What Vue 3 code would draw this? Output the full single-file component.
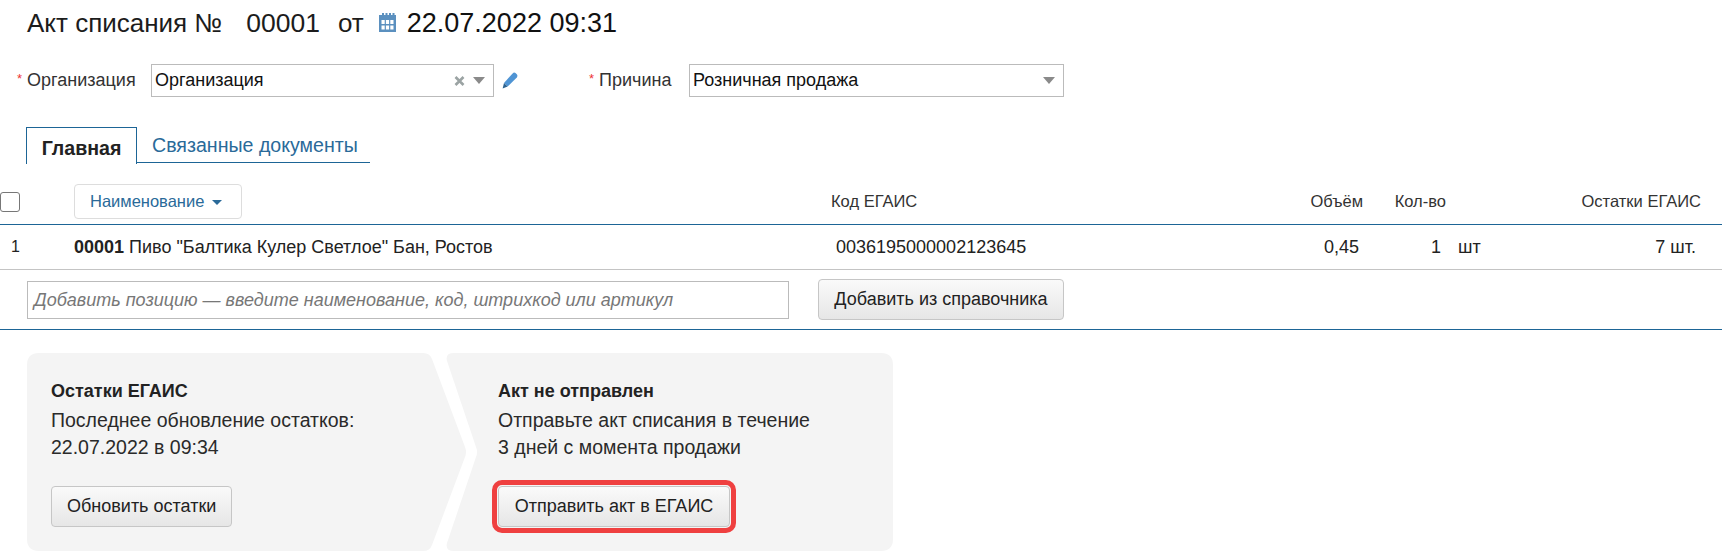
<template>
  <div class="page">
    <h1 class="title">
      <span>Акт списания №</span>
      <span class="num">00001</span>
      <span class="from">от</span>
      <svg class="cal" viewBox="0 0 17 19" width="17" height="19">
        <path fill="#5b90bf" d="M2 2h1V0h2v2h1.5V0h2v2H10V0h2v2h1.5V0h2v2H17v17H0V2z" />
        <path fill="#fff" d="M2.5 7h3.2v4H2.5zM6.9 7h3.2v4H6.9zM11.3 7h3.2v4h-3.2zM2.5 12.5h3.2v4H2.5zM6.9 12.5h3.2v4H6.9zM11.3 12.5h3.2v4h-3.2z" />
      </svg>
      <span class="date">22.07.2022 09:31</span>
    </h1>

    <div class="form-row">
      <label class="lbl org-lbl"><i>*</i>Организация</label>
      <div class="select org">
        <span class="val">Организация</span>
        <svg class="x" viewBox="0 0 11 10" width="11" height="10">
          <path d="M1.5 1l8 8M9.5 1l-8 8" stroke="#9ba3a3" stroke-width="2.6" fill="none" />
        </svg>
        <span class="caret"></span>
      </div>
      <svg class="pencil" viewBox="0 0 16 17" width="16" height="17">
        <path fill="#4f94d4" d="M10.6 1.4Q12 0 13.5 1L15 2.6Q16 4 14.8 5.4L5.6 14.6 2 11z" />
        <path fill="#2d628f" d="M2 11L5.6 14.6 .6 16.4z" />
      </svg>
      <label class="lbl why-lbl"><i>*</i>Причина</label>
      <div class="select why">
        <span class="val">Розничная продажа</span>
        <span class="caret"></span>
      </div>
    </div>

    <div class="tabs">
      <div class="tab active">Главная</div>
      <div class="tab">Связанные документы</div>
    </div>

    <div class="grid head">
      <div class="check"></div>
      <div><span class="sort">Наименование<span class="sort-caret"></span></span></div>
      <div>Код ЕГАИС</div>
      <div class="r">Объём</div>
      <div class="r">Кол-во</div>
      <div></div>
      <div class="r">Остатки ЕГАИС</div>
    </div>

    <div class="grid item">
      <div class="idx">1</div>
      <div><b>00001</b> Пиво "Балтика Кулер Светлое" Бан, Ростов</div>
      <div class="code">0036195000002123645</div>
      <div class="r vol">0,45</div>
      <div class="r qty">1</div>
      <div class="unit">шт</div>
      <div class="r rest">7 шт.</div>
    </div>

    <div class="add-row">
      <div class="add-input">Добавить позицию — введите наименование, код, штрихкод или артикул</div>
      <button class="btn add-btn">Добавить из справочника</button>
    </div>

    <div class="cards">
      <div class="card first">
        <h3>Остатки ЕГАИС</h3>
        <p>Последнее обновление остатков:<br />22.07.2022 в 09:34</p>
        <button class="btn">Обновить остатки</button>
      </div>
      <div class="card second">
        <h3>Акт не отправлен</h3>
        <p>Отправьте акт списания в течение<br />3 дней с момента продажи</p>
        <button class="btn marked">Отправить акт в ЕГАИС</button>
      </div>
    </div>
  </div>
</template>

<script setup>
</script>

<style>
html, body {
  background: #fff;
  overflow: hidden;
}
</style>

<style scoped>
.page {
  width: 1722px;
  height: 555px;
  overflow: hidden;
  font-family: "Liberation Sans", Arial, sans-serif;
  font-size: 18px;
  color: #222;
}

.title {
  display: flex;
  align-items: center;
  margin: 0;
  padding: 4px 0 0 27px;
  height: 37px;
  font-size: 26px;
  font-weight: normal;
  line-height: 30px;
  color: #1c1c1c;
}
.num {
  margin-left: 24px;
  font-size: 26.5px;
}
.from {
  margin-left: 18px;
}
.cal {
  margin-left: 15px;
}
.date {
  margin-left: 11px;
  font-size: 27px;
  color: #111;
}

.form-row {
  display: flex;
  align-items: center;
  margin-top: 23px;
  height: 33px;
}
.lbl {
  color: #333;
  white-space: nowrap;
}
.lbl i {
  color: #e33;
  font-style: normal;
  font-size: 13px;
  margin-right: 5px;
  vertical-align: 3px;
}
.org-lbl {
  margin-left: 17px;
  width: 134px;
}
.why-lbl {
  margin-left: 71px;
  width: 100px;
}
.select {
  display: flex;
  align-items: center;
  height: 33px;
  box-sizing: border-box;
  border: 1px solid #bbb;
  padding: 0 8px 0 3px;
  background: #fff;
  color: #111;
}
.org {
  width: 343px;
}
.why {
  width: 375px;
}
.val {
  flex: 1;
}
.x {
  margin-right: 8px;
}
.caret {
  width: 0;
  height: 0;
  border-left: 6.5px solid transparent;
  border-right: 6.5px solid transparent;
  border-top: 7px solid #8a8a8a;
}
.pencil {
  margin-left: 8px;
}

.tabs {
  display: flex;
  margin: 30px 0 0 26px;
  height: 36px;
}
.tab {
  box-sizing: border-box;
  height: 36px;
  color: #2a6a99;
  font-size: 19.6px;
  line-height: 32px;
  padding: 2px 12px 0 15px;
  border-bottom: 1px solid #1d6596;
}
.tab.active {
  width: 111px;
  height: 37px;
  padding: 4px 0 0;
  text-align: center;
  font-weight: bold;
  color: #222;
  border: 1px solid #1d6596;
  border-bottom: 0;
}

.grid {
  display: grid;
  grid-template-columns: 74px 757px 449px 83px 83px 52px 1fr;
  align-items: center;
  padding-right: 21px;
}
.r {
  text-align: right;
}
.head {
  height: 61px;
  padding-top: 15px;
  font-size: 16.5px;
  border-bottom: 1px solid #1d6596;
  margin-top: 1px;
  box-sizing: border-box;
  color: #333;
}
.check {
  box-sizing: border-box;
  width: 20px;
  height: 20px;
  border: 1px solid #777;
  border-radius: 3px;
}
.sort {
  display: inline-flex;
  align-items: center;
  box-sizing: border-box;
  width: 168px;
  height: 35px;
  padding-left: 15px;
  color: #2a6a99;
  border: 1px solid #ddd;
  border-radius: 4px;
}
.sort-caret {
  margin-left: 8px;
  margin-top: 2px;
  width: 0;
  height: 0;
  border-left: 5px solid transparent;
  border-right: 5px solid transparent;
  border-top: 5px solid #2a6a99;
}
.item {
  height: 45px;
  box-sizing: border-box;
  border-bottom: 1px solid #c4c4c4;
}
.idx {
  padding-left: 11px;
  font-size: 16px;
}
.code {
  padding-left: 5px;
}
.vol {
  padding-right: 4px;
}
.qty {
  padding-right: 5px;
}
.unit {
  padding-left: 12px;
}
.rest {
  padding-right: 5px;
}

.add-row {
  display: flex;
  align-items: center;
  gap: 29px;
  height: 60px;
  padding-left: 27px;
  box-sizing: border-box;
  border-bottom: 1px solid #1d6596;
}
.add-input {
  box-sizing: border-box;
  width: 762px;
  height: 38px;
  line-height: 36px;
  padding-left: 6px;
  border: 1px solid #bbb;
  font-style: italic;
  color: #777;
  white-space: nowrap;
}
.btn {
  box-sizing: border-box;
  height: 41px;
  padding: 0 15px;
  font: inherit;
  color: #222;
  border: 1px solid #c6c6c6;
  border-radius: 4px;
  background: linear-gradient(#fafafa, #e6e6e6);
  white-space: nowrap;
}
.add-btn {
  width: 246px;
}

.cards {
  display: flex;
  margin: 23px 0 0 27px;
  height: 198px;
}
.card {
  box-sizing: border-box;
  background: #f4f4f4;
  padding-top: 28px;
}
.card h3 {
  margin: 0;
  font-size: 18px;
  line-height: 20px;
  color: #222;
}
.card p {
  margin: 6px 0 25px;
  font-size: 19.5px;
  line-height: 27px;
  color: #2a2a2a;
}
.first {
  width: 440px;
  padding-left: 24px;
  clip-path: path("M12 0H396Q403 0 405 6L438 94Q440 99 438 104L405 192Q403 198 396 198H12Q0 198 0 186V12Q0 0 12 0Z");
}
.second {
  width: 448px;
  margin-left: -22px;
  padding-left: 53px;
  clip-path: path("M9 0H436Q448 0 448 12V186Q448 198 436 198H9Q0 198 2 190L31 104Q33 99 31 94L2 8Q0 0 9 0Z");
}
.marked {
  outline: 5px solid #ef4040;
  outline-offset: 1px;
  width: 232px;
}
</style>
